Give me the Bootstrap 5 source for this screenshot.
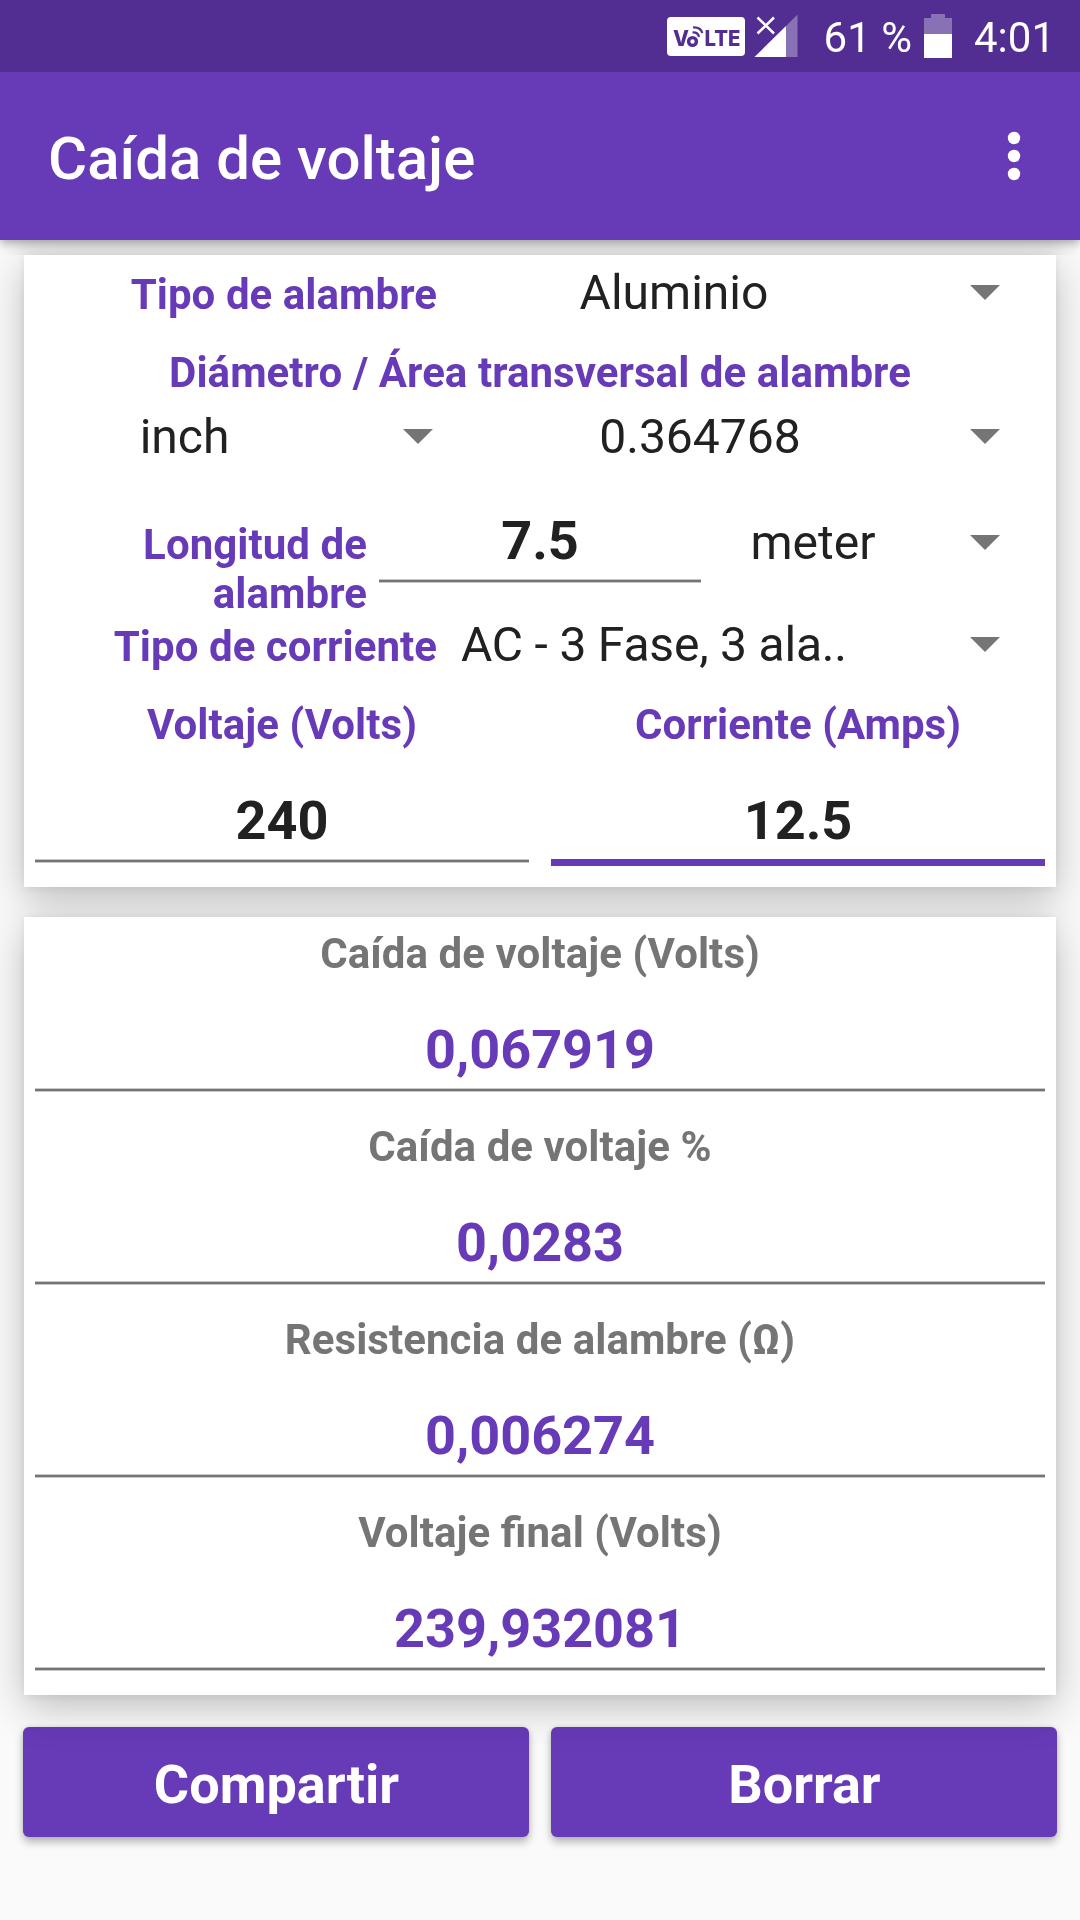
<!DOCTYPE html>
<html lang="es">
<head>
<meta charset="utf-8">
<meta name="viewport" content="width=device-width, initial-scale=1">
<title>Caída de voltaje</title>
<link rel="stylesheet" href="https://cdn.jsdelivr.net/npm/bootstrap@5.3.0/dist/css/bootstrap.min.css">
<style>
  :root { --brand: #673ab7; --brand-dark: #522e92; --ink: #212121; --hint: #757575; }
  body { font-family: Roboto, "Liberation Sans", sans-serif; color: var(--ink); width: 1080px; height: 1920px; overflow: hidden; background: linear-gradient(90deg, #fafafa, #ebebeb 30px, #ebebeb 1050px, #fafafa) 0 240px / 1080px 15px no-repeat #fafafa; }
  .status-bar { height: 72px; background: var(--brand-dark); color: #fff; font-size: 42px; line-height: 42px; padding-right: 25px; z-index: 3; }
  .badge-volte { margin-right: 9px; }
  .signal { margin-right: 26px; }
  .battery { margin: 0 22px 0 12px; }
  .app-bar { height: 168px; background: var(--brand); padding: 5px 57px 0 48px; z-index: 2; box-shadow: 0 3px 9px rgba(0,0,0,.32); }
  .app-title { font-size: 60px; font-weight: 500; line-height: 72px; color: #fff; }
  .menu-dots { margin-bottom: 5px; }
  .panels { padding: 15px 24px 0; gap: 30px; filter: drop-shadow(0 1px 5px rgba(0,0,0,.07)) drop-shadow(0 12px 20px rgba(0,0,0,.24)); z-index: 1; }
  .panel { background: #fff; padding: 0 11px; }
  .panel-in { height: 632px; }
  .panel-out { height: 778px; }
  .lbl { font-size: 42px; font-weight: 700; color: var(--brand); line-height: 49px; white-space: nowrap; letter-spacing: .06px; }
  .lbl-side { width: 402px; text-align: right; padding-top: 4px; }
  .lbl-long { width: 332px; text-align: right; }
  .spin { font-size: 48px; line-height: 43px; padding-right: 45px; white-space: nowrap; }
  .spin-text { flex: 1 1 0; text-align: center; }
  .spin-clip { text-align: left; padding-left: 14px; letter-spacing: -.2px; }
  .spin svg { margin-left: 69px; flex: none; }
  .h-type { height: 75px; }
  .h-diam { height: 85px; }
  .h-size { height: 43px; margin-bottom: 62px; }
  .h-long { height: 98px; }
  .h-curr { height: 53px; }
  .h-heads { height: 107px; }
  .w-598 { width: 598px; }
  .w-443 { width: 443px; }
  .w-546 { width: 546px; }
  .w-320 { width: 320px; height: 45px; }
  .pair { gap: 22px; }
  .pair > * { flex: 1 1 0; }
  .num { font-size: 54px; font-weight: 700; text-align: center; line-height: 77px; }
  .num::after { content: ""; display: block; height: 4px; background: linear-gradient(#c9c9c9 1px, #747474 1px 3px, #c9c9c9 3px); }
  .num-len { width: 322px; line-height: 41px; margin-left: 12px; margin-right: 24px; }
  .num-len::after { margin-top: 18px; }
  .num-focus::after { height: 7px; background: var(--brand); }
  .result { height: 193px; text-align: center; }
  .result .lbl { line-height: 73px; color: var(--hint); margin-bottom: 21px; }
  .result .num { color: var(--brand); }
  .actions { padding: 32px 23px 0; gap: 22px; }
  .act { height: 110px; flex: 1 1 0; border: 0; border-radius: 6px; background: var(--brand); color: #fff; font-size: 54px; font-weight: 700; line-height: 60px; padding: 5px 0 0 1px; box-shadow: 0 5px 8px rgba(0,0,0,.28), 0 0 4px rgba(0,0,0,.1); }
</style>
</head>
<body>
<header class="status-bar position-relative d-flex justify-content-end align-items-center">
  <svg class="badge-volte" width="78" height="39" viewBox="0 0 78 39">
    <rect width="78" height="39" rx="4" fill="#fff"/>
    <g fill="#522e92" font-family="Inter, Roboto, sans-serif" font-weight="800">
      <text x="6" y="29" font-size="22" textLength="16" lengthAdjust="spacingAndGlyphs">V</text>
      <text x="37.500" y="29" font-size="22" textLength="36" lengthAdjust="spacingAndGlyphs">LTE</text>
    </g>
    <g fill="none" stroke="#522e92">
      <circle cx="25.500" cy="24.500" r="3.900" stroke-width="3.400"/>
      <path d="M25.500 15.500Q31 15 32 20" stroke-width="2.200"/>
      <path d="M26 10.500Q33.500 10 35.300 16" stroke-width="2.200"/>
    </g>
  </svg>
  <svg class="signal" width="44" height="44" viewBox="0 0 44 44">
    <path d="M32 12 43.500.5V43H32z" fill="#fff" fill-opacity=".32"/>
    <path d="M.5 43 32 12V43z" fill="#fff"/>
    <path d="M3 3 20 19M20 3 3 19" stroke="#522e92" stroke-width="5"/>
    <path d="M3.500 3.500 20 19.500M20 3.500 3.500 19.500" stroke="#fff" stroke-width="2.500"/>
  </svg>
  <span class="pt-1">61 %</span>
  <svg class="battery" width="28" height="44" viewBox="0 0 28 44">
    <path d="M7 0h14v4h7v16H0V4h7z" fill="#fff" fill-opacity=".32"/>
    <path d="M0 20h28v24H0z" fill="#fff"/>
  </svg>
  <span class="pt-1">4:01</span>
</header>

<nav class="app-bar position-relative d-flex justify-content-between align-items-center">
  <span class="app-title">Caída de voltaje</span>
  <svg class="menu-dots" width="18" height="54" viewBox="0 0 18 54" fill="#fff">
    <circle cx="9" cy="9" r="6.200"/><circle cx="9" cy="27" r="6.200"/><circle cx="9" cy="45" r="6.200"/>
  </svg>
</nav>

<main class="panels position-relative d-flex flex-column">
  <section class="panel panel-in">
    <div class="d-flex justify-content-between align-items-center h-type">
      <div class="lbl lbl-side">Tipo de alambre</div>
      <div class="spin w-598 d-flex align-items-center"><span class="spin-text">Aluminio</span><svg width="30" height="15" viewBox="0 0 30 15"><path d="M0 0h30L15 15z" fill="#757575"/></svg></div>
    </div>
    <div class="lbl d-flex justify-content-center align-items-center h-diam">Diámetro / Área transversal de alambre</div>
    <div class="d-flex justify-content-between h-size">
      <div class="spin w-443 d-flex align-items-center"><span class="spin-text">inch</span><svg width="30" height="15" viewBox="0 0 30 15"><path d="M0 0h30L15 15z" fill="#757575"/></svg></div>
      <div class="spin w-546 d-flex align-items-center"><span class="spin-text">0.364768</span><svg width="30" height="15" viewBox="0 0 30 15"><path d="M0 0h30L15 15z" fill="#757575"/></svg></div>
    </div>
    <div class="d-flex align-items-start h-long">
      <div class="lbl lbl-long">Longitud de<br>alambre</div>
      <div class="num num-len">7.5</div>
      <div class="spin w-320 d-flex align-items-center"><span class="spin-text">meter</span><svg width="30" height="15" viewBox="0 0 30 15"><path d="M0 0h30L15 15z" fill="#757575"/></svg></div>
    </div>
    <div class="d-flex justify-content-between align-items-center h-curr">
      <div class="lbl lbl-side">Tipo de corriente</div>
      <div class="spin w-598 d-flex align-items-center"><span class="spin-text spin-clip">AC - 3 Fase, 3 ala..</span><svg width="30" height="15" viewBox="0 0 30 15"><path d="M0 0h30L15 15z" fill="#757575"/></svg></div>
    </div>
    <div class="pair d-flex text-center align-items-center h-heads">
      <div class="lbl">Voltaje (Volts)</div>
      <div class="lbl">Corriente (Amps)</div>
    </div>
    <div class="pair d-flex pt-1">
      <div class="num">240</div>
      <div class="num num-focus">12.5</div>
    </div>
  </section>

  <section class="panel panel-out">
    <div class="result"><div class="lbl">Caída de voltaje (Volts)</div><div class="num">0,067919</div></div>
    <div class="result"><div class="lbl">Caída de voltaje %</div><div class="num">0,0283</div></div>
    <div class="result"><div class="lbl">Resistencia de alambre (Ω)</div><div class="num">0,006274</div></div>
    <div class="result"><div class="lbl">Voltaje ﬁnal (Volts)</div><div class="num">239,932081</div></div>
  </section>
</main>

<footer class="actions d-flex">
  <button class="act" type="button">Compartir</button>
  <button class="act" type="button">Borrar</button>
</footer>
<script src="https://cdn.jsdelivr.net/npm/bootstrap@5.3.0/dist/js/bootstrap.bundle.min.js"></script>
</body>
</html>
